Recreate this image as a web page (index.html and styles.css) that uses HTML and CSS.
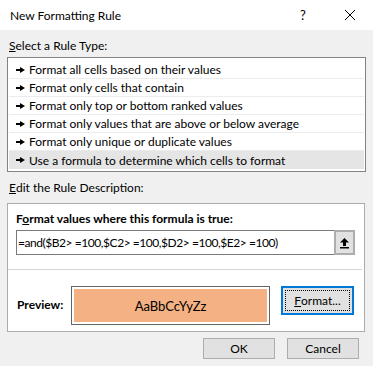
FILE: index.html
```html
<!doctype html>
<html lang="en">
<head>
    <meta charset="UTF-8">
    <title>New Formatting Rule</title>
    <link rel="stylesheet" href="styles.css">
</head>
<body>
    <div class="titlebar">
        <span class="title">New Formatting Rule</span>
        <span class="help">?</span>
        <span class="close">
            <svg width="12" height="12" viewBox="0 0 12 12"><path d="M1 1L11 11M11 1L1 11" stroke="#000" stroke-width="1"/></svg>
        </span>
    </div>
    <div class="dialog">
        <div class="caption"><u>S</u>elect a Rule Type:</div>
        <div class="list">
            <div class="row"><span class="arrow"></span>Format all cells based on their values</div>
            <div class="row"><span class="arrow"></span>Format only cells that contain</div>
            <div class="row"><span class="arrow"></span>Format only top or bottom ranked values</div>
            <div class="row"><span class="arrow"></span>Format only values that are above or below average</div>
            <div class="row"><span class="arrow"></span>Format only unique or duplicate values</div>
            <div class="row selected"><span class="arrow"></span>Use a formula to determine which cells to format</div>
        </div>
        <div class="caption caption2"><u>E</u>dit the Rule Description:</div>
        <div class="desc">
            <div class="desc-top">
                <div class="bold">F<u>o</u>rmat values where this formula is true:</div>
                <div class="formula">
                    <div class="formula-text">=and($B2&gt; =100,$C2&gt; =100,$D2&gt; =100,$E2&gt; =100)</div>
                    <div class="ref-btn">
                        <svg width="11" height="12" viewBox="0 0 11 12"><path d="M5.5 1L1 5.5H4V9H7V5.5H10Z" fill="#000"/><rect x="1" y="10" width="9" height="1.5" fill="#000"/></svg>
                    </div>
                </div>
            </div>
            <div class="preview-row">
                <div class="bold preview-label">Preview:</div>
                <div class="preview-box"><div class="preview-fill">AaBbCcYyZz</div></div>
                <div class="btn format-btn"><span class="focus"><u>F</u>ormat...</span></div>
            </div>
        </div>
        <div class="buttons">
            <div class="btn">OK</div>
            <div class="btn">Cancel</div>
        </div>
    </div>
</body>
</html>
```
FILE: styles.css
```css
body{
    margin: 0;
    width: 373px;
    height: 366px;
    overflow: hidden;
    background: #f0f0f0;
    font-family: Lato, "Noto Sans", sans-serif;
    font-size: 12px;
    color: #000;
}
.titlebar{
    height: 30px;
    background: #fff;
    display: flex;
    align-items: center;
    padding-left: 10px;
}
.title{
    flex: 1;
}
.help{
    width: 44px;
    font-size: 13px;
}
.close{
    width: 29px;
    display: flex;
    align-items: center;
}
.dialog{
    padding: 0 7px;
}
.caption{
    height: 27px;
    display: flex;
    align-items: flex-end;
    padding-left: 2px;
    line-height: 18px;
    padding-bottom: 2px;
    box-sizing: border-box;
}
.caption2{
    height: 31px;
    padding-bottom: 0;
    align-items: center;
    padding-top: 1px;
}
.list{
    border: 1px solid #828282;
    background: #fff;
    padding: 3px 1px 2px 1px;
    width: 355px;
}
.row{
    height: 18px;
    display: flex;
    align-items: center;
    padding-left: 7px;
    border-bottom: 1px solid #ececec;
    box-sizing: border-box;
}
.row.selected{
    background: #e5e5e5;
    border-bottom: none;
}
.arrow{
    width: 9px;
    height: 6px;
    margin-right: 4px;
    position: relative;
}
.arrow::before{
    content: "";
    display: block;
    width: 6px;
    height: 2px;
    background: #000;
    margin-top: 2px;
}
.arrow::after{
    content: "";
    position: absolute;
    left: 4px;
    top: 0;
    border-left: 5px solid #000;
    border-top: 3px solid transparent;
    border-bottom: 3px solid transparent;
}
.desc{
    border: 1px solid #adadad;
    background: #fff;
    width: 358px;
    height: 129px;
    box-sizing: border-box;
    display: flex;
    flex-direction: column;
}
.desc-top{
    padding: 7px 8px 0 8px;
    height: 66px;
    border-bottom: 1px solid #d5d5d5;
    margin-right: 2px;
    box-sizing: border-box;
}
.bold{
    font-weight: bold;
}
.formula{
    display: flex;
    margin-top: 4px;
    width: 339px;
}
.formula-text{
    flex: 1;
    height: 25px;
    border: 1px solid #7a7a7a;
    border-right: none;
    box-sizing: border-box;
    display: flex;
    align-items: center;
    padding-left: 1px;
    letter-spacing: -0.45px;
}
.ref-btn{
    width: 21px;
    height: 25px;
    background: #e1e1e1;
    border: 2px solid #adadad;
    box-sizing: border-box;
    display: flex;
    align-items: center;
    justify-content: center;
}
.preview-row{
    display: flex;
    align-items: flex-start;
    padding: 16px 0 0 9px;
}
.preview-label{
    width: 54px;
    margin-top: 11px;
}
.preview-box{
    width: 199px;
    height: 39px;
    border: 1px solid #646464;
    padding: 2px;
    box-sizing: border-box;
    background: #fff;
}
.preview-fill{
    height: 100%;
    background: #f4b183;
    display: flex;
    align-items: center;
    justify-content: center;
    font-size: 13px;
}
.btn{
    width: 72px;
    height: 21px;
    background: #e1e1e1;
    border: 1px solid #adadad;
    box-sizing: border-box;
    display: flex;
    align-items: center;
    justify-content: center;
}
.format-btn{
    margin-left: 11px;
    width: 73px;
    height: 29px;
    border: 2px solid #0078d7;
    padding: 2px;
}
.focus{
    width: 100%;
    height: 100%;
    border: 1px dotted #000;
    box-sizing: border-box;
    display: flex;
    align-items: center;
    justify-content: center;
}
.buttons{
    display: flex;
    justify-content: flex-end;
    gap: 12px;
    padding: 6px 7px 0 0;
}
```
